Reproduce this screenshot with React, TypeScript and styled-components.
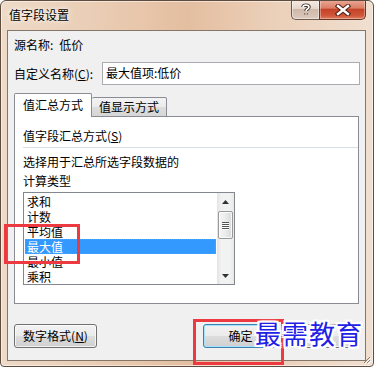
import React from "react";
import styled, { createGlobalStyle } from "styled-components";

const Global = createGlobalStyle`
  html, body { margin: 0; padding: 0; background: #ffffff; }
  body { font-family: "Noto Sans CJK SC", "Noto Sans", sans-serif; font-size: 12px; color: #000; }
  * { box-sizing: border-box; }
`;

const Window = styled.div`
  position: relative;
  width: 374px;
  height: 367px;
  display: flex;
  flex-direction: column;
  padding: 0 7px 5px 6px;
  border: 1px solid #5e4c3f;
  border-radius: 6px 6px 4px 4px;
  background: linear-gradient(90deg, #eedac8 0%, #e8c8ad 35%, #e4bea0 50%, #ebcfb8 72%, #f0dfd0 100%);
  box-shadow: inset 0 0 0 1px rgba(255, 255, 255, 0.5);
  overflow: hidden;
`;

const TitleBar = styled.div`
  height: 29px;
  display: flex;
  align-items: flex-start;
  justify-content: space-between;
`;

const Title = styled.div`
  margin: 6px 0 0 2px;
  line-height: 16px;
  font-size: 12px;
  color: #000;
  text-shadow: 0 0 6px rgba(255, 255, 255, 0.9), 0 0 3px rgba(255, 255, 255, 0.9);
`;

const CaptionGroup = styled.div`
  display: flex;
  margin-top: -1px;
`;

const HelpBtn = styled.div`
  width: 28px;
  height: 20px;
  border: 1px solid #6d5a4d;
  border-top: none;
  border-right: none;
  border-radius: 0 0 0 5px;
  background: linear-gradient(180deg, #f6ece5 0%, #e6d6cb 45%, #cfb8a9 50%, #dccabd 100%);
  box-shadow: inset 0 0 0 1px rgba(255, 255, 255, 0.45);
  display: flex;
  align-items: center;
  justify-content: center;
`;

const CloseBtn = styled.div`
  width: 47px;
  height: 20px;
  border: 1px solid #6a3426;
  border-top: none;
  border-radius: 0 0 5px 0;
  background: linear-gradient(180deg, #eaa995 0%, #dc7e66 42%, #c4432a 50%, #cf5537 80%, #dd7a5c 100%);
  box-shadow: inset 0 0 0 1px rgba(255, 255, 255, 0.35);
  display: flex;
  align-items: center;
  justify-content: center;
`;

const Client = styled.div`
  flex: 1;
  background: #f0f0f0;
  border: 1px solid #85766a;
  padding: 0 6px 0 6px;
  display: flex;
  flex-direction: column;
`;

const SourceRow = styled.div`
  margin-top: 6px;
  line-height: 16px;
  height: 16px;
  display: flex;
  gap: 6px;
`;

const NameRow = styled.div`
  margin-top: 9px;
  height: 23px;
  display: flex;
  align-items: center;
`;

const Label = styled.div`
  width: 88px;
  line-height: 16px;
  white-space: nowrap;
`;

const U = styled.span`
  text-decoration: underline;
`;

const TextBox = styled.div`
  flex: 1;
  height: 23px;
  margin-right: -1px;
  background: #fff;
  border: 1px solid #a9abb0;
  padding-left: 3px;
  line-height: 20px;
  white-space: nowrap;
`;

const TabStrip = styled.div`
  margin-top: 9px;
  height: 23px;
  display: flex;
  align-items: flex-end;
  position: relative;
  z-index: 1;
  margin-bottom: -1px;
`;

const Tab = styled.div<{ $active?: boolean }>`
  width: ${(p) => (p.$active ? 78 : 75)}px;
  height: ${(p) => (p.$active ? 24 : 20)}px;
  border: 1px solid #898c95;
  border-left: ${(p) => (p.$active ? "1px solid #898c95" : "none")};
  border-bottom: ${(p) => (p.$active ? "none" : "1px solid #898c95")};
  border-radius: 2px 2px 0 0;
  background: ${(p) =>
    p.$active ? "#ffffff" : "linear-gradient(180deg, #f3f3f3 0%, #ebebeb 50%, #dddddd 52%, #d6d6d6 100%)"};
  display: flex;
  align-items: center;
  justify-content: center;
  padding-bottom: ${(p) => (p.$active ? 1 : 0)}px;
  line-height: 16px;
`;

const Panel = styled.div`
  height: 188px;
  border: 1px solid #898c95;
  background: #fff;
  padding: 9px 0 0 8px;
  display: flex;
  flex-direction: column;
`;

const GroupTitle = styled.div`
  line-height: 16px;
  height: 16px;
  margin-top: 2px;
`;

const Separator = styled.div`
  height: 1px;
  background: #d5dfe5;
  margin-top: 3px;
`;

const Desc = styled.div`
  margin-top: 4px;
  line-height: 19px;
`;

const ListBox = styled.div`
  margin-top: 2px;
  width: 212px;
  height: 93px;
  border: 1px solid #828790;
  display: flex;
  background: #fff;
`;

const Items = styled.div`
  flex: 1;
  padding: 1px 1px 0 1px;
  overflow: hidden;
`;

const Item = styled.div<{ $selected?: boolean }>`
  height: 15px;
  line-height: 15px;
  padding-left: 2px;
  outline: ${(p) => (p.$selected ? "1px dotted #d2893d" : "none")};
  outline-offset: -1px;
  background: ${(p) => (p.$selected ? "#3399ff" : "transparent")};
  color: ${(p) => (p.$selected ? "#ffffff" : "#000000")};
  white-space: nowrap;
`;

const ScrollBar = styled.div`
  width: 17px;
  display: flex;
  flex-direction: column;
  align-items: center;
  background: linear-gradient(90deg, #e3e3e3 0%, #f2f2f2 25%, #f2f2f2 75%, #e8e8e8 100%);
`;

const ArrowBtn = styled.div`
  height: 17px;
  width: 17px;
  display: flex;
  align-items: center;
  justify-content: center;
`;

const Thumb = styled.div`
  margin-top: 1px;
  width: 15px;
  height: 28px;
  border: 1px solid #999;
  border-radius: 2px;
  background: linear-gradient(90deg, #f5f5f5 0%, #ebebeb 50%, #d9d9d9 100%);
  box-shadow: inset 0 0 0 1px rgba(255, 255, 255, 0.8);
  display: flex;
  flex-direction: column;
  align-items: center;
  justify-content: center;
  gap: 1px;
`;

const GripLine = styled.div`
  width: 7px;
  height: 1px;
  background: #555;
  box-shadow: 0 1px 0 #fff;
`;

const Spacer = styled.div`
  flex: 1;
`;

const ButtonRow = styled.div`
  margin-top: 20px;
  height: 24px;
  display: flex;
  gap: 6px;
`;

const Button = styled.div<{ $width: number; $default?: boolean }>`
  width: ${(p) => p.$width}px;
  height: 24px;
  border: 1px solid ${(p) => (p.$default ? "#3c7fb1" : "#707070")};
  border-radius: 3px;
  background: linear-gradient(180deg, #f2f2f2 0%, #ebebeb 48%, #dddddd 52%, #cfcfcf 100%);
  box-shadow: inset 0 0 0 1px ${(p) => (p.$default ? "#a6e2fb" : "rgba(255,255,255,0.7)")};
  display: flex;
  align-items: center;
  justify-content: center;
  line-height: 16px;
  margin-left: ${(p) => (p.$default ? "auto" : "0")};
`;

const RedBox = styled.div<{ $l: number; $t: number; $w: number; $h: number }>`
  position: absolute;
  left: ${(p) => p.$l}px;
  top: ${(p) => p.$t}px;
  width: ${(p) => p.$w}px;
  height: ${(p) => p.$h}px;
  border: 3px solid #ec3a40;
  pointer-events: none;
`;

const Watermark = styled.div`
  position: absolute;
  left: 254px;
  top: 316px;
  font-size: 26px;
  line-height: 32px;
  letter-spacing: 1px;
  color: #1f22e6;
  white-space: nowrap;
  text-shadow: 2px 0 0 #fff, -2px 0 0 #fff, 0 2px 0 #fff, 0 -2px 0 #fff, 2px 2px 0 #fff, -2px -2px 0 #fff,
    2px -2px 0 #fff, -2px 2px 0 #fff, 0 0 4px #fff;
`;

const Grip = styled.svg`
  position: absolute;
  right: 2px;
  bottom: 2px;
`;

const items = ["求和", "计数", "平均值", "最大值", "最小值", "乘积"];

export default function App() {
  return (
    <>
      <Global />
      <Window>
        <TitleBar>
          <Title>值字段设置</Title>
          <CaptionGroup>
            <HelpBtn>
              <svg width="10" height="13" viewBox="0 0 10 13">
                <path
                  d="M2 4 C2 1.5 8 1.5 8 4 C8 6 5 6 5 8 M5 10.2 L5 11.6"
                  fill="none"
                  stroke="#3a2a20"
                  strokeWidth="3.4"
                />
                <path
                  d="M2 4 C2 1.5 8 1.5 8 4 C8 6 5 6 5 8 M5 10.2 L5 11.6"
                  fill="none"
                  stroke="#ffffff"
                  strokeWidth="1.6"
                />
              </svg>
            </HelpBtn>
            <CloseBtn>
              <svg width="16" height="12" viewBox="0 0 16 12">
                <path d="M3 2 L13 10 M13 2 L3 10" stroke="#4a1c12" strokeWidth="4.4" strokeLinecap="square" />
                <path d="M3 2 L13 10 M13 2 L3 10" stroke="#ffffff" strokeWidth="2.4" strokeLinecap="square" />
              </svg>
            </CloseBtn>
          </CaptionGroup>
        </TitleBar>
        <Client>
          <SourceRow>
            <span>源名称:</span>
            <span>低价</span>
          </SourceRow>
          <NameRow>
            <Label>
              自定义名称(<U>C</U>):
            </Label>
            <TextBox>最大值项:低价</TextBox>
          </NameRow>
          <TabStrip>
            <Tab $active>值汇总方式</Tab>
            <Tab>值显示方式</Tab>
          </TabStrip>
          <Panel>
            <GroupTitle>
              值字段汇总方式(<U>S</U>)
            </GroupTitle>
            <Separator />
            <Desc>
              选择用于汇总所选字段数据的
              <br />
              计算类型
            </Desc>
            <ListBox>
              <Items>
                {items.map((t, i) => (
                  <Item key={t} $selected={i === 3}>
                    {t}
                  </Item>
                ))}
              </Items>
              <ScrollBar>
                <ArrowBtn>
                  <svg width="7" height="4" viewBox="0 0 7 4">
                    <path d="M0 4 L3.5 0 L7 4 Z" fill="#333" />
                  </svg>
                </ArrowBtn>
                <Thumb>
                  <GripLine />
                  <GripLine />
                  <GripLine />
                  <GripLine />
                </Thumb>
                <Spacer />
                <ArrowBtn>
                  <svg width="7" height="4" viewBox="0 0 7 4">
                    <path d="M0 0 L7 0 L3.5 4 Z" fill="#333" />
                  </svg>
                </ArrowBtn>
              </ScrollBar>
            </ListBox>
          </Panel>
          <ButtonRow>
            <Button $width={83}>
              数字格式(<U>N</U>)
            </Button>
            <Button $width={75} $default>
              确定
            </Button>
            <Button $width={75} />
          </ButtonRow>
        </Client>
        <Grip width="10" height="10" viewBox="0 0 10 10">
          <path d="M9 3 L3 9 M9 6 L6 9" stroke="#8a7a6c" strokeWidth="1" />
          <path d="M10 4 L4 10 M10 7 L7 10" stroke="#ffffff" strokeWidth="1" />
        </Grip>
        <RedBox $l={3} $t={223} $w={76} $h={40} />
        <RedBox $l={192} $t={318} $w={91} $h={46} />
        <Watermark>最需教育</Watermark>
      </Window>
    </>
  );
}
